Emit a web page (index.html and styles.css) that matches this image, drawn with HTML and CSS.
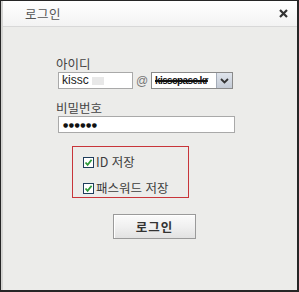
FILE: index.html
```html
<!DOCTYPE html>
<html lang="ko">
<head>
  <meta charset="UTF-8">
  <title>로그인</title>
  <link rel="stylesheet" href="styles.css">
</head>
<body>
  <div class="dialog">
    <div class="titlebar">
      <span class="title">로그인</span>
      <svg class="close" width="9" height="9" viewBox="0 0 9 9"><path d="M1 1 L8 8 M8 1 L1 8" stroke="#333" stroke-width="2.2"/></svg>
    </div>

    <div class="form">
      <div class="label">아이디</div>
      <div class="id-row">
        <div class="field id-field">kissc<span class="smudge"></span></div>
        <span class="at">@</span>
        <div class="field select">
          <span class="domain">kisscpase.kr</span>
          <span class="arrow">
            <svg width="9" height="6" viewBox="0 0 9 6"><path d="M1 1 L4.5 4.5 L8 1" fill="none" stroke="#333" stroke-width="1.8"/></svg>
          </span>
        </div>
      </div>

      <div class="label pw-label">비밀번호</div>
      <div class="field pw-field">&#x25CF;&#x25CF;&#x25CF;&#x25CF;&#x25CF;&#x25CF;</div>

      <div class="save-box">
        <label class="check-row">
          <span class="checkbox"><svg width="9" height="9" viewBox="0 0 9 9"><path d="M1.5 4.5 L3.6 6.8 L7.6 1.8" fill="none" stroke="#2f9a3a" stroke-width="1.8"/></svg></span>
          ID 저장
        </label>
        <label class="check-row">
          <span class="checkbox"><svg width="9" height="9" viewBox="0 0 9 9"><path d="M1.5 4.5 L3.6 6.8 L7.6 1.8" fill="none" stroke="#2f9a3a" stroke-width="1.8"/></svg></span>
          패스워드 저장
        </label>
      </div>

      <button class="login-btn">로그인</button>
    </div>
  </div>
</body>
</html>
```

FILE: styles.css
```css
body {
  margin: 0;
  font-family: 'Noto Sans CJK KR', 'Liberation Sans', sans-serif;
  background: #ececea;
}

.dialog {
  width: 299px;
  height: 292px;
  box-sizing: border-box;
  border: 1px solid #262626;
  border-width: 1px 2px 2px 1px;
  background: #ececea;
  box-shadow: inset 2px 0 0 #d4d4d2;
}

.titlebar {
  height: 25px;
  display: flex;
  align-items: center;
  justify-content: space-between;
  padding: 0 9px 0 22px;
  background: linear-gradient(#ffffff, #f3f3f3);
  border-bottom: 1px solid #d8d8d8;
  margin-left: 2px;
}

.title {
  font-size: 12.5px;
  color: #555;
  letter-spacing: 0.5px;
}

.close {
  display: block;
}

.form {
  padding: 29px 0 0 55px;
}

.label {
  font-size: 12.5px;
  line-height: 15px;
  color: #444;
  margin-bottom: 1px;
}

.pw-label {
  margin-top: 11px;
}

.id-row {
  display: flex;
  align-items: center;
  margin-left: 2px;
}

.field {
  height: 17px;
  box-sizing: border-box;
  background: #fff;
  border: 1px solid #a9a9a9;
  font-family: 'Liberation Sans', sans-serif;
  font-size: 12px;
  line-height: 15px;
  color: #222;
  display: flex;
  align-items: center;
}

.id-field {
  width: 75px;
  padding-left: 3px;
}

.smudge {
  display: inline-block;
  width: 12px;
  height: 8px;
  margin-left: 3px;
  background: #e8e8e8;
}

.at {
  width: 18px;
  text-align: center;
  font-family: 'Liberation Sans', sans-serif;
  font-size: 12px;
  color: #777;
}

.select {
  width: 82px;
  padding-left: 3px;
  justify-content: space-between;
  border-color: #8a8a8a;
}

.domain {
  font-size: 10px;
  color: #111;
  font-weight: bold;
  text-decoration: line-through;
  text-decoration-thickness: 2px;
  letter-spacing: -0.6px;
}

.arrow {
  width: 15px;
  height: 15px;
  display: flex;
  align-items: center;
  justify-content: center;
  background: linear-gradient(#dfe4ec, #c4cbd6);
  border-left: 1px solid #a4acb8;
}

.pw-field {
  width: 177px;
  margin-left: 2px;
  padding-left: 4px;
  font-family: 'DejaVu Sans', sans-serif;
  font-size: 6px;
  letter-spacing: 0.5px;
  color: #111;
}

.save-box {
  width: 117px;
  height: 52px;
  box-sizing: border-box;
  margin: 13px 0 0 16px;
  border: 1px solid #c8353a;
  padding: 5px 0 0 10px;
  display: flex;
  flex-direction: column;
  gap: 6px;
}

.check-row {
  display: flex;
  align-items: center;
  gap: 2px;
  font-size: 12.5px;
  line-height: 20px;
  color: #3c3c3c;
}

.checkbox {
  width: 11px;
  height: 11px;
  box-sizing: border-box;
  border: 1px solid #1f3d5c;
  background: #fff;
  display: flex;
  align-items: center;
  justify-content: center;
}

.login-btn {
  display: block;
  width: 83px;
  height: 25px;
  margin: 16px 0 0 57px;
  border: 1px solid #9a9a9a;
  background: linear-gradient(#fbfbfb 0%, #f0f0f0 50%, #e2e2e2 100%);
  box-shadow: inset 1px 1px 0 #fff;
  font-family: 'Noto Sans CJK KR', sans-serif;
  font-size: 12.5px;
  font-weight: bold;
  color: #333;
  letter-spacing: 1px;
  padding: 0;
}
```
